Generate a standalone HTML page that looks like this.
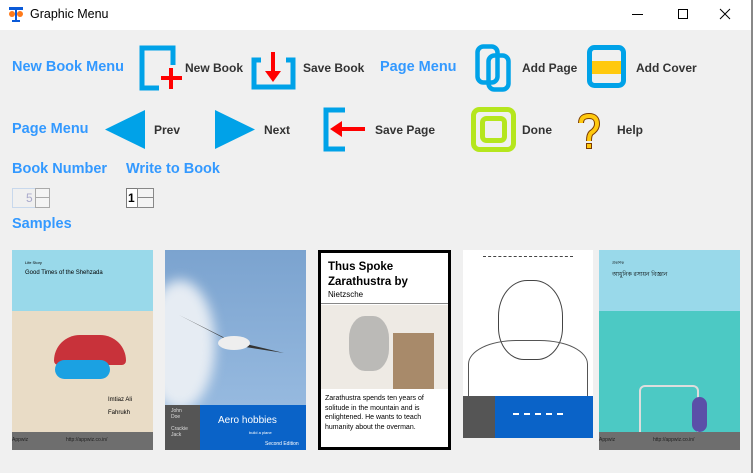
<!DOCTYPE html>
<html><head><meta charset="utf-8"><style>
*{margin:0;padding:0;box-sizing:border-box}
body{width:753px;height:473px;background:#f0f0f0;position:relative;overflow:hidden;font-family:"Liberation Sans",Arial,sans-serif}
.a{position:absolute}
.h{position:absolute;color:#3399ff;font-weight:bold;font-size:14.5px;line-height:18px}
.l{position:absolute;color:#333;font-weight:bold;font-size:12px;line-height:14px}
</style></head><body>
<div class="a" style="left:0;top:0;width:753px;height:30px;background:#fff"></div>
<svg class="a" style="left:8px;top:7px" width="16" height="16"><rect x="1" y="0" width="14" height="3" fill="#0a5ad8"/><rect x="7" y="3" width="2" height="12" fill="#0a5ad8"/><rect x="4" y="13" width="8" height="2" fill="#0a5ad8"/><circle cx="4" cy="7" r="3" fill="#ff7a1a"/><circle cx="12" cy="7" r="3" fill="#ff7a1a"/></svg>
<div class="a" style="left:30px;top:7px;font-size:12.5px;color:#000">Graphic Menu</div>
<div class="a" style="left:632px;top:14px;width:11px;height:1px;background:#000"></div>
<div class="a" style="left:678px;top:9px;width:10px;height:10px;border:1px solid #000"></div>
<svg class="a" style="left:719px;top:8px" width="12" height="12"><path d="M1 1 L11 11 M11 1 L1 11" stroke="#000" stroke-width="1"/></svg>
<div class="a" style="left:751px;top:0;width:2px;height:473px;background:#888"></div>

<div class="h" style="left:12px;top:58px">New Book Menu</div>
<svg class="a" style="left:139px;top:45px" width="45" height="48"><path d="M34 20 V3 H3 V43 H20" fill="none" stroke="#00a2e8" stroke-width="5"/><rect x="22" y="31" width="21" height="4" fill="#f00"/><rect x="30" y="23" width="4" height="21" fill="#f00"/></svg>
<div class="l" style="left:185px;top:61px">New Book</div>
<svg class="a" style="left:251px;top:52px" width="46" height="40"><path d="M10 8 H3 V35 H42 V8 H35" fill="none" stroke="#00a2e8" stroke-width="5"/><rect x="20" y="0" width="4" height="22" fill="#f00"/><path d="M14 19 H30 L22 30 Z" fill="#f00"/></svg>
<div class="l" style="left:303px;top:61px">Save Book</div>
<div class="h" style="left:380px;top:58px">Page Menu</div>
<svg class="a" style="left:475px;top:44px" width="38" height="48"><rect x="2.5" y="2.5" width="20" height="36" rx="6" fill="none" stroke="#00a2e8" stroke-width="4.5"/><rect x="13.5" y="11.5" width="20" height="34" rx="6" fill="none" stroke="#00a2e8" stroke-width="4.5"/></svg>
<div class="l" style="left:522px;top:61px">Add Page</div>
<svg class="a" style="left:587px;top:45px" width="40" height="43"><rect x="2.5" y="2.5" width="34" height="38" rx="5" fill="none" stroke="#00a2e8" stroke-width="5"/><rect x="5" y="16" width="29" height="13" fill="#ffc90e"/></svg>
<div class="l" style="left:636px;top:61px">Add Cover</div>

<div class="h" style="left:12px;top:120px">Page Menu</div>
<svg class="a" style="left:105px;top:110px" width="42" height="40"><path d="M0 19.5 L40 0 V39 Z" fill="#00a2e8"/></svg>
<div class="l" style="left:154px;top:123px">Prev</div>
<svg class="a" style="left:215px;top:110px" width="42" height="40"><path d="M40 19.5 L0 0 V39 Z" fill="#00a2e8"/></svg>
<div class="l" style="left:264px;top:123px">Next</div>
<svg class="a" style="left:323px;top:107px" width="44" height="45"><path d="M22 3 H3 V42 H22" fill="none" stroke="#00a2e8" stroke-width="5"/><rect x="16" y="20" width="26" height="4" fill="#f00"/><path d="M7 22 L19 14 V30 Z" fill="#f00"/></svg>
<div class="l" style="left:375px;top:123px">Save Page</div>
<svg class="a" style="left:471px;top:107px" width="46" height="46"><rect x="2.5" y="2.5" width="40" height="40" rx="6" fill="none" stroke="#b5e61d" stroke-width="5"/><rect x="11.5" y="11.5" width="22" height="22" rx="4" fill="none" stroke="#b5e61d" stroke-width="5"/></svg>
<div class="l" style="left:522px;top:123px">Done</div>
<svg class="a" style="left:577px;top:113px" width="24" height="38"><path d="M4 10 Q4 3 12 3 Q20 3 20 11 Q20 16 14 20 Q12 22 12 28" fill="none" stroke="#7a3a00" stroke-width="6"/><path d="M4 10 Q4 3 12 3 Q20 3 20 11 Q20 16 14 20 Q12 22 12 28" fill="none" stroke="#ffc90e" stroke-width="4"/><rect x="9" y="30" width="6" height="6" fill="#7a3a00"/><rect x="10" y="31" width="4" height="4" fill="#ffc90e"/></svg>
<div class="l" style="left:617px;top:123px">Help</div>

<div class="h" style="left:12px;top:160px">Book Number</div>
<div class="h" style="left:126px;top:160px">Write to Book</div>
<div class="a" style="left:12px;top:188px;width:38px;height:20px;border:1px solid #c8d8ec;background:#f0f0f0"></div>
<div class="a" style="left:26px;top:191px;color:#aac;font-size:12px">5</div>
<div class="a" style="left:35px;top:188px;width:15px;height:20px;border:1px solid #aaa;background:#f4f4f4"></div>
<div class="a" style="left:35px;top:197px;width:15px;height:1px;background:#aaa"></div>
<div class="a" style="left:126px;top:188px;width:28px;height:20px;border:1px solid #7a7a7a;background:#fff"></div>
<div class="a" style="left:128px;top:191px;color:#000;font-size:12px;font-weight:bold">1</div>
<div class="a" style="left:137px;top:188px;width:17px;height:20px;border:1px solid #888;background:#f4f4f4"></div>
<div class="a" style="left:137px;top:197px;width:17px;height:1px;background:#888"></div>
<div class="h" style="left:12px;top:215px">Samples</div>

<div class="a" style="left:12px;top:250px;width:141px;height:200px;background:#e9dcc6;overflow:hidden">
<div class="a" style="left:0;top:0;width:141px;height:61px;background:#99d9ea"></div>
<div class="a" style="left:13px;top:10px;font-size:4px">Life Story</div>
<div class="a" style="left:13px;top:20px;font-size:6px">Good Times of the Shehzada</div>
<div class="a" style="left:42px;top:85px;width:72px;height:30px;background:#c8323a;border-radius:30px 30px 5px 5px"></div>
<div class="a" style="left:43px;top:110px;width:55px;height:19px;background:#1ba1e2;border-radius:10px"></div>
<div class="a" style="left:96px;top:147px;font-size:6px">Imtiaz Ali</div>
<div class="a" style="left:96px;top:160px;font-size:6px">Fahrukh</div>
<div class="a" style="left:0;top:182px;width:141px;height:18px;background:#6e6e6e"></div>
<div class="a" style="left:0;top:187px;font-size:5px;color:#222">Appwiz</div>
<div class="a" style="left:54px;top:187px;font-size:5px;color:#222">http://appwiz.co.in/</div>
</div>
<div class="a" style="left:165px;top:250px;width:141px;height:200px;background:linear-gradient(#7ba3cf,#9ec0e4);overflow:hidden">
<div class="a" style="left:-20px;top:30px;width:70px;height:130px;background:#e6ecf3;border-radius:50%;filter:blur(6px)"></div>
<svg class="a" style="left:14px;top:60px" width="110" height="60"><path d="M0 5 L50 30 L105 43 L60 36 Z" fill="#333"/><ellipse cx="55" cy="33" rx="16" ry="7" fill="#eee"/></svg>
<div class="a" style="left:0;top:155px;width:35px;height:45px;background:#555"></div>
<div class="a" style="left:6px;top:158px;font-size:5px;color:#ddd;line-height:6px">John<br>Doe<br><br>Crackie<br>Jack</div>
<div class="a" style="left:35px;top:155px;width:106px;height:45px;background:#0a63c8"></div>
<div class="a" style="left:53px;top:165px;font-size:10px;color:#fff">Aero hobbies</div>
<div class="a" style="left:84px;top:180px;font-size:4px;color:#fff">build a plane</div>
<div class="a" style="left:100px;top:191px;font-size:5px;color:#fff">Second Edition</div>
</div>
<div class="a" style="left:318px;top:250px;width:133px;height:200px;background:#fff;border:3px solid #000">
<div class="a" style="left:7px;top:7px;font-size:11.5px;font-weight:bold;line-height:15px;color:#000">Thus Spoke<br>Zarathustra by</div>
<div class="a" style="left:7px;top:37px;font-size:8px;color:#000">Nietzsche</div>
<div class="a" style="left:0;top:50px;width:127px;height:1px;background:#888"></div>
<div class="a" style="left:0;top:52px;width:127px;height:84px;background:#eeeae4"></div>
<div class="a" style="left:28px;top:63px;width:40px;height:55px;border-radius:40%;background:#999;opacity:.6"></div>
<div class="a" style="left:72px;top:80px;width:41px;height:56px;background:#a88a6a"></div>
<div class="a" style="left:4px;top:141px;font-size:7px;line-height:9.5px;color:#000">Zarathustra spends ten years of solitude in the mountain and is enlightened. He wants to teach humanity about the overman.</div>
</div>
<div class="a" style="left:463px;top:250px;width:130px;height:188px;background:#fff;overflow:hidden">
<div class="a" style="left:20px;top:6px;width:90px;height:2px;border-top:1px dashed #444"></div>
<div class="a" style="left:35px;top:30px;width:65px;height:80px;border:1px solid #444;border-radius:45% 45% 40% 40%"></div>
<div class="a" style="left:5px;top:90px;width:120px;height:60px;border:1px solid #555;border-radius:40% 40% 0 0"></div>
<div class="a" style="left:0;top:146px;width:32px;height:42px;background:#555"></div>
<div class="a" style="left:32px;top:146px;width:98px;height:42px;background:#0a63c8"></div>
<div class="a" style="left:50px;top:163px;width:50px;height:1px;border-top:2px dashed #fff"></div>
</div>
<div class="a" style="left:599px;top:250px;width:141px;height:200px;background:#4cc9c4;overflow:hidden">
<div class="a" style="left:0;top:0;width:141px;height:61px;background:#99d9ea"></div>
<div class="a" style="left:13px;top:10px;font-size:4px">প্রকাশক</div>
<div class="a" style="left:13px;top:19px;font-size:6px">আধুনিক রসায়ন বিজ্ঞান</div>
<div class="a" style="left:40px;top:135px;width:60px;height:47px;border:2px solid #ddd;border-bottom:none;border-radius:6px 6px 0 0"></div>
<div class="a" style="left:93px;top:147px;width:15px;height:35px;background:#5b4fa8;border-radius:8px"></div>
<div class="a" style="left:0;top:182px;width:141px;height:18px;background:#6e6e6e"></div>
<div class="a" style="left:0;top:187px;font-size:5px;color:#222">Appwiz</div>
<div class="a" style="left:54px;top:187px;font-size:5px;color:#222">http://appwiz.co.in/</div>
</div>
</body></html>
